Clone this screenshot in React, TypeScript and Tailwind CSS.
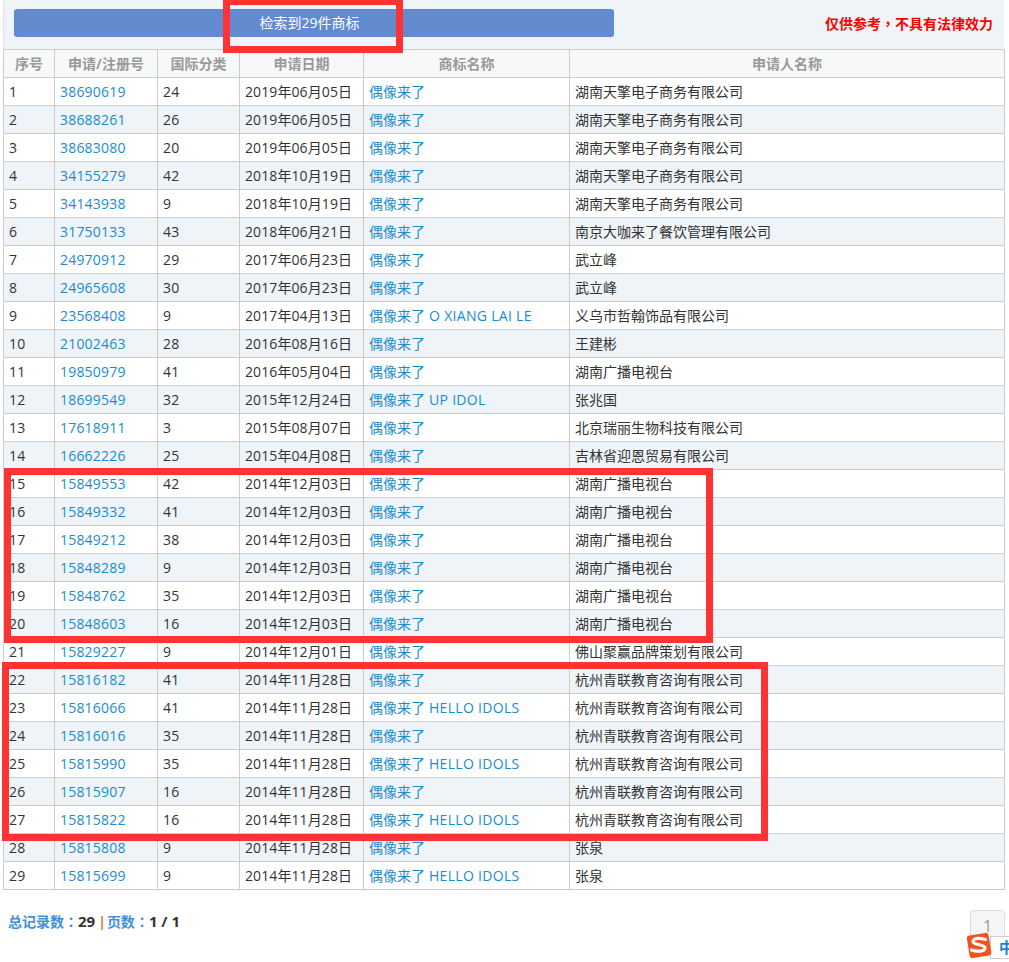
const rows: [string, string, string, string, string, string][] = [
  ["38690619", "24", "2019年06月05日", "偶像来了", "", "湖南天擎电子商务有限公司"],
  ["38688261", "26", "2019年06月05日", "偶像来了", "", "湖南天擎电子商务有限公司"],
  ["38683080", "20", "2019年06月05日", "偶像来了", "", "湖南天擎电子商务有限公司"],
  ["34155279", "42", "2018年10月19日", "偶像来了", "", "湖南天擎电子商务有限公司"],
  ["34143938", "9", "2018年10月19日", "偶像来了", "", "湖南天擎电子商务有限公司"],
  ["31750133", "43", "2018年06月21日", "偶像来了", "", "南京大咖来了餐饮管理有限公司"],
  ["24970912", "29", "2017年06月23日", "偶像来了", "", "武立峰"],
  ["24965608", "30", "2017年06月23日", "偶像来了", "", "武立峰"],
  ["23568408", "9", "2017年04月13日", "偶像来了", "O XIANG LAI LE", "义乌市哲翰饰品有限公司"],
  ["21002463", "28", "2016年08月16日", "偶像来了", "", "王建彬"],
  ["19850979", "41", "2016年05月04日", "偶像来了", "", "湖南广播电视台"],
  ["18699549", "32", "2015年12月24日", "偶像来了", "UP IDOL", "张兆国"],
  ["17618911", "3", "2015年08月07日", "偶像来了", "", "北京瑞丽生物科技有限公司"],
  ["16662226", "25", "2015年04月08日", "偶像来了", "", "吉林省迎恩贸易有限公司"],
  ["15849553", "42", "2014年12月03日", "偶像来了", "", "湖南广播电视台"],
  ["15849332", "41", "2014年12月03日", "偶像来了", "", "湖南广播电视台"],
  ["15849212", "38", "2014年12月03日", "偶像来了", "", "湖南广播电视台"],
  ["15848289", "9", "2014年12月03日", "偶像来了", "", "湖南广播电视台"],
  ["15848762", "35", "2014年12月03日", "偶像来了", "", "湖南广播电视台"],
  ["15848603", "16", "2014年12月03日", "偶像来了", "", "湖南广播电视台"],
  ["15829227", "9", "2014年12月01日", "偶像来了", "", "佛山聚赢品牌策划有限公司"],
  ["15816182", "41", "2014年11月28日", "偶像来了", "", "杭州青联教育咨询有限公司"],
  ["15816066", "41", "2014年11月28日", "偶像来了", "HELLO IDOLS", "杭州青联教育咨询有限公司"],
  ["15816016", "35", "2014年11月28日", "偶像来了", "", "杭州青联教育咨询有限公司"],
  ["15815990", "35", "2014年11月28日", "偶像来了", "HELLO IDOLS", "杭州青联教育咨询有限公司"],
  ["15815907", "16", "2014年11月28日", "偶像来了", "", "杭州青联教育咨询有限公司"],
  ["15815822", "16", "2014年11月28日", "偶像来了", "HELLO IDOLS", "杭州青联教育咨询有限公司"],
  ["15815808", "9", "2014年11月28日", "偶像来了", "", "张泉"],
  ["15815699", "9", "2014年11月28日", "偶像来了", "HELLO IDOLS", "张泉"],
];

const headers = ["序号", "申请/注册号", "国际分类", "申请日期", "商标名称", "申请人名称"];

export default function App() {
  return (
    <div className="relative h-[962px] w-full overflow-hidden bg-white font-['Open_Sans','Noto_Sans_CJK_SC',sans-serif] text-[14px] text-[#333]">
      <div className="ml-[3px] flex h-[49px] w-[1001px] items-start border-l border-[#dde3e8] bg-[#eff4f8] pt-[9px] pl-[10px]">
        <div className="flex h-[28px] w-[600px] items-center justify-center rounded-[3px] bg-[#6389cf] pr-[9px] text-[14px] leading-none text-white">
          <span>检索到29件商标</span>
        </div>
        <span className="ml-[211px] text-[14px] leading-[28px] font-bold text-[#ff0000]">
          仅供参考<span className="font-['Noto_Sans_CJK_TC',sans-serif]">，</span>不具有法律效力
        </span>
      </div>

      <table className="ml-[3px] w-[1001px] table-fixed border-collapse">
        <colgroup>
          <col className="w-[51px]" />
          <col className="w-[103px]" />
          <col className="w-[82px]" />
          <col className="w-[124px]" />
          <col className="w-[206px]" />
          <col className="w-[435px]" />
        </colgroup>
        <thead>
          <tr className="h-[28px] bg-[#f7f8f8]">
            {headers.map((h) => (
              <th key={h} className="border border-[#cccccc] p-0 text-center text-[14px] leading-none font-bold text-[#999999]">
                {h}
              </th>
            ))}
          </tr>
        </thead>
        <tbody>
          {rows.map((r, i) => (
            <tr key={r[0]} className={i % 2 === 1 ? "h-[28px] bg-[#eff4f9]" : "h-[28px] bg-white"}>
              <td className="border border-[#cccccc] py-0 pl-[5px] leading-none tracking-[0.2px]">{i + 1}</td>
              <td className="border border-[#cccccc] py-0 pl-[5px] leading-none tracking-[0.2px] text-[#1b8bd0]">{r[0]}</td>
              <td className="border border-[#cccccc] py-0 pl-[5px] leading-none tracking-[0.2px]">{r[1]}</td>
              <td className="border border-[#cccccc] py-0 pl-[5px] leading-none tracking-[0.1px]">{r[2]}</td>
              <td className="border border-[#cccccc] py-0 pl-[5px] leading-none text-[#1b8bd0]">
                {r[3]}
                {r[4] ? <span className="ml-[4px] tracking-[0.3px]">{r[4]}</span> : null}
              </td>
              <td className="border border-[#cccccc] py-0 pl-[5px] leading-none">{r[5]}</td>
            </tr>
          ))}
        </tbody>
      </table>

      <div className="mt-[22px] ml-[8px] flex items-baseline text-[14px] leading-[18px] font-bold text-[#3d90de]">
        <span>总记录数</span>
        <span className="font-['Noto_Sans_CJK_TC',sans-serif]">：</span>
        <span className="text-[15px] text-[#333]">29</span>
        <span className="mr-[1px] ml-[3px] text-[#c8862a]">|</span>
        <span>页数</span>
        <span className="font-['Noto_Sans_CJK_TC',sans-serif]">：</span>
        <span className="text-[15px] text-[#333]">1 / 1</span>
      </div>

      <div className="absolute top-[910px] left-[970px] flex h-[44px] w-[35px] items-start justify-center rounded-[4px] border border-[#dddddd] bg-[#f5f5f5] pt-[3px] text-[16px] text-[#999]">
        1
      </div>

      <div className="absolute top-[936px] left-[990px] flex h-[23px] w-[30px] items-center border border-[#cccccc] bg-white pl-[8px] text-[15px] leading-none font-bold text-[#1b7fd8]">
        中
      </div>
      <svg className="absolute top-[931px] left-[965px]" width="28" height="28" viewBox="0 0 28 28">
        <rect x="3" y="3" width="22" height="23" rx="3" fill="#f4511e" transform="rotate(-9 14 14)" />
        <path d="M20.5 8.5 C15 6.5 8.5 7 8 10.5 C7.5 14 19.5 13 20 17 C20.5 20.5 11.5 21 6.5 19" fill="none" stroke="#fff" strokeWidth="3.2" strokeLinecap="round" />
      </svg>

      <div className="pointer-events-none absolute top-[-2px] left-[223px] h-[55px] w-[180px] border-[7px] border-[#ff3333]" />
      <div className="pointer-events-none absolute top-[468px] left-[4px] h-[175px] w-[709px] border-[7px] border-[#ff3333]" />
      <div className="pointer-events-none absolute top-[662px] left-[2px] h-[179px] w-[766px] border-[7px] border-[#ff3333]" />
    </div>
  );
}
